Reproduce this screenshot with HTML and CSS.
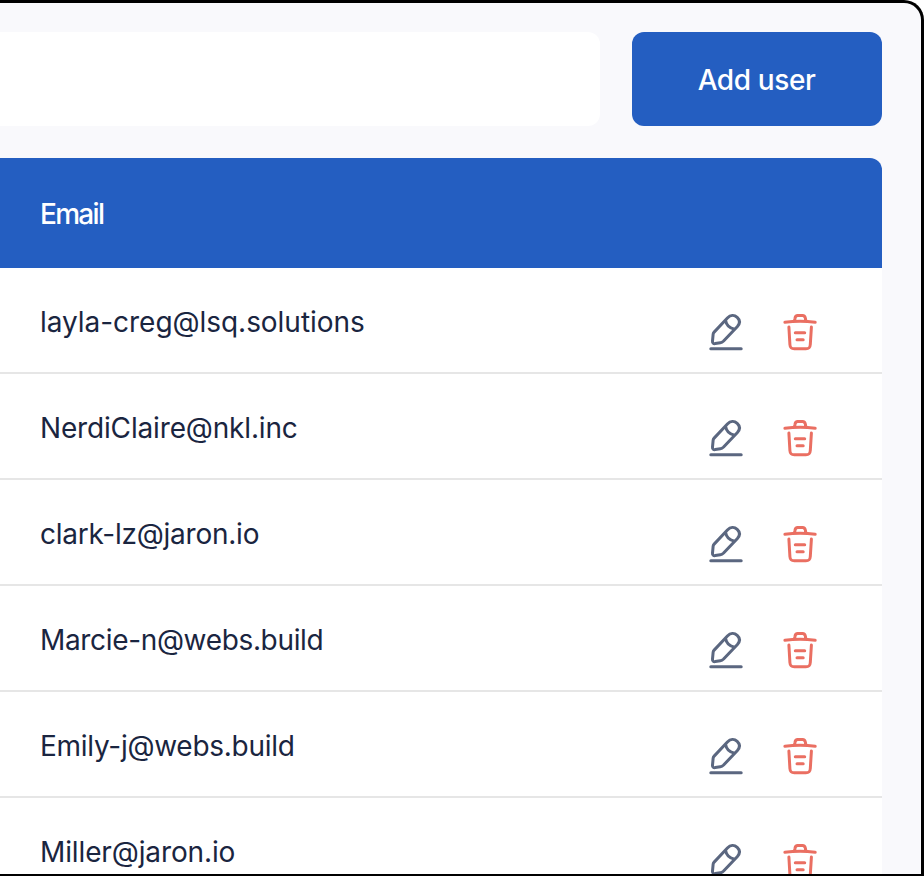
FILE: index.html
```
<!DOCTYPE html>
<html lang="en">
<head>
<meta charset="utf-8">
<title>Users</title>
<link rel="stylesheet" href="styles.css">
</head>
<body>
<svg class="sprite" aria-hidden="true">
  <symbol id="edit" viewBox="0 0 40 40">
    <path d="M4.800 36.700H35.200M7.900 20.400 21.400 6C24.500 2.700 28.300 2.600 31.200 5.300S34.200 11.400 31.200 14.700L17.600 29C16.500 30.100 15.800 30.600 14.300 30.800L9.200 31.600C7.500 31.800 6.300 30.800 6.500 29.100L7.100 22.600C7.200 21.500 7.200 21.100 7.900 20.400ZM19.500 8.300C20.300 12.900 23.900 16.400 28.600 17.200"/>
  </symbol>
  <symbol id="trash" viewBox="0 0 40 40">
    <path d="M4.900 10.200Q20 8.400 35.200 10.200M14.600 8.600 15 6.200C15.300 4 16.200 3.400 17.700 3.400H22.600C24.500 3.400 25.100 4.700 25.400 6.300L25.800 8.600M8.900 15.100 9.900 32.500C10.100 35.400 10.900 36.800 14.300 36.800H25.900C29.300 36.800 30.100 35.400 30.300 32.500L31.400 15.100M15.300 20.700H24.700M17 27.700H23.200"/>
  </symbol>
</svg>
<div class="window">
  <div class="toolbar">
    <div class="search"></div>
    <button class="add">Add user</button>
  </div>
  <div class="table">
    <div class="head"><span>Email</span></div>
    <div class="row"><span class="email layla">layla-creg@lsq.solutions</span><svg class="icon edit"><use href="#edit"/></svg><svg class="icon trash"><use href="#trash"/></svg></div>
    <div class="row"><span class="email claire">NerdiClaire@nkl.inc</span><svg class="icon edit"><use href="#edit"/></svg><svg class="icon trash"><use href="#trash"/></svg></div>
    <div class="row"><span class="email clark">clark-lz@jaron.io</span><svg class="icon edit"><use href="#edit"/></svg><svg class="icon trash"><use href="#trash"/></svg></div>
    <div class="row"><span class="email marcie">Marcie-n@webs.build</span><svg class="icon edit"><use href="#edit"/></svg><svg class="icon trash"><use href="#trash"/></svg></div>
    <div class="row"><span class="email emily">Emily-j@webs.build</span><svg class="icon edit"><use href="#edit"/></svg><svg class="icon trash"><use href="#trash"/></svg></div>
    <div class="row"><span class="email miller">Miller@jaron.io</span><svg class="icon edit"><use href="#edit"/></svg><svg class="icon trash"><use href="#trash"/></svg></div>
  </div>
</div>
</body>
</html>
```
FILE: styles.css
```
* { box-sizing: border-box; }
body {
  margin: 0;
  background: #fff;
  font-family: Inter, "Liberation Sans", sans-serif;
  font-size: 28px;
  color: #1a2540;
}
.sprite { display: none; }
.window {
  height: 876px;
  overflow: hidden;
  padding: 29px 39px 0 0;
  background: #f9f9fc;
  border: 3px solid #000;
  border-left: 0;
  border-bottom-width: 2px;
  border-top-right-radius: 20px;
}
.toolbar { display: flex; gap: 32px; height: 94px; margin-bottom: 32px; }
.search { flex: 1; background: #fff; border-radius: 0 12px 12px 0; }
.add {
  width: 250px;
  border: 0;
  border-radius: 12px;
  padding: 2px 1px 0 0;
  background: #245ec1;
  color: #fff;
  font: 500 28px Inter, "Liberation Sans", sans-serif;
  letter-spacing: -0.4px;
}
.head {
  display: flex;
  align-items: center;
  height: 110px;
  padding: 2px 0 0 40px;
  background: #245ec1;
  color: #fff;
  border-top-right-radius: 12px;
  font-weight: 500;
  letter-spacing: -1.7px;
}
.row {
  display: flex;
  height: 106px;
  padding: 0 62px 0 40px;
  background: #fff;
  border-bottom: 2px solid #e6e6e6;
}
.email { flex: 1; padding-top: 37px; line-height: 34px; white-space: nowrap; }
.layla { letter-spacing: -0.04px; }
.claire { letter-spacing: -0.16px; }
.clark { letter-spacing: -0.24px; }
.marcie { letter-spacing: -0.34px; }
.emily { letter-spacing: -0.27px; }
.miller { letter-spacing: -0.12px; }
.icon {
  width: 40px;
  height: 40px;
  margin-top: 44px;
  fill: none;
  stroke-width: 3;
  stroke-linecap: round;
  stroke-linejoin: round;
}
.edit { stroke: #5b6780; margin-right: 34px; }
.trash { stroke: #ea6f62; }
```
